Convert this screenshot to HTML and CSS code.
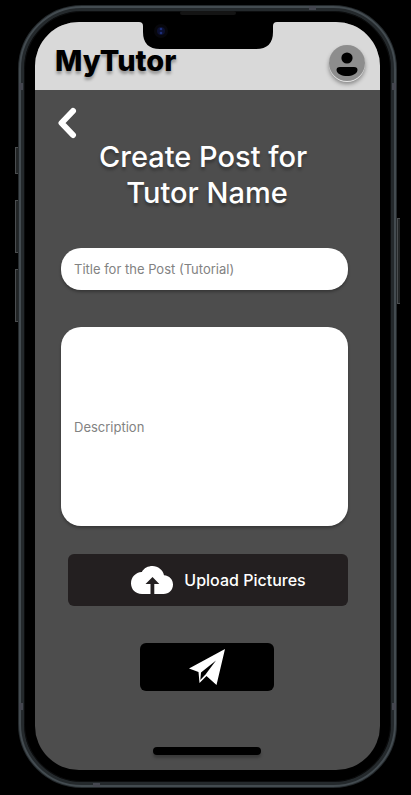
FILE: index.html
```html
<!DOCTYPE html>
<html lang="en">
<head>
<meta charset="utf-8">
<meta name="viewport" content="width=device-width, initial-scale=1">
<title>MyTutor</title>
<link rel="stylesheet" href="styles.css">
</head>
<body>
<div class="phone">
  <span class="key key-mute"></span>
  <span class="key key-up"></span>
  <span class="key key-down"></span>
  <span class="key key-power"></span>
  <span class="band band-top"></span>
  <span class="band band-bottom"></span>
  <span class="band band-left"></span>
  <span class="band band-right"></span>
  <span class="band band-left low"></span>
  <span class="band band-right low"></span>
  <span class="speaker"></span>
  <div class="screen">
    <svg class="notch" viewBox="0 0 138 27" aria-hidden="true">
      <path d="M0 0H138Q134 0 134 4V10Q134 27 117 27H21Q4 27 4 10V4Q4 0 0 0Z"/>
      <circle cx="22" cy="9" r="7" fill="#07070c"/>
      <circle cx="22" cy="9" r="4" fill="#0c1030"/>
      <circle cx="22" cy="7" r="1.3" fill="#1c2e78"/>
      <circle cx="22" cy="11" r="1.3" fill="#1c2e78"/>
    </svg>
    <header class="topbar">
      <span class="brand">MyTutor</span>
      <button class="avatar" type="button" aria-label="Profile">
        <svg viewBox="0 0 36 36" aria-hidden="true">
          <circle cx="18" cy="13" r="5.6"/>
          <path d="M11 22H25Q28.500 22 28.500 25C28 29 23 31 18 31S8 29 7.500 25Q7.500 22 11 22Z"/>
        </svg>
      </button>
    </header>
    <main class="content">
      <a class="back" href="#" aria-label="Back">
        <svg viewBox="0 0 20 32" aria-hidden="true"><path d="M16 4L4.500 16L16 28"/></svg>
      </a>
      <h1>Create Post for&nbsp;<br>Tutor Name</h1>
      <form class="form">
        <input class="field" type="text" aria-label="Title" placeholder="Title for the Post (Tutorial)">
        <textarea class="field description" aria-label="Description" placeholder="Description"></textarea>
        <button class="upload" type="button">
          <svg viewBox="0 0 42 28" aria-hidden="true">
            <path fill="#fff" d="M11 28C4 28 0 23 0 17.300C0 11 4.500 6.500 10.800 6C13 2 17 0 21.500 0C27 0 32 4 33 9.200C38.500 9.500 42 13.500 42 18.500C42 24 38 28 32.500 28Z"/>
            <path fill="#231f20" d="M21.500 11L28.300 18H23.300V28H19.500V18H14.500Z"/>
          </svg>
          <span>Upload Pictures</span>
        </button>
        <button class="send" type="submit" aria-label="Send">
          <svg viewBox="0 0 36 36" aria-hidden="true">
            <path d="M36 0L27.500 36L17.500 27L10.500 34L9.500 23L0 19.500Z" fill="#fff"/>
            <path d="M27 11.500L12 23.500L11.300 31L16.500 25.500Z" fill="#000"/>
          </svg>
        </button>
      </form>
      <span class="home"></span>
    </main>
  </div>
</div>
</body>
</html>
```
FILE: styles.css
```css
* {
  box-sizing: border-box;
}

body {
  margin: 0;
  padding: 5px 14px 7px 18px;
  background: #000;
  font-family: Inter, "Liberation Sans", sans-serif;
}

.phone {
  position: relative;
  padding: 11px 11px 12px;
  border: 6px solid #24292c;
  border-radius: 64px;
  background: #000;
  box-shadow: inset 0 0 0 1px #0c0d0e;
}

.phone::before {
  content: "";
  position: absolute;
  inset: -5px;
  border: 2px solid #434b50;
  border-radius: 63px;
  pointer-events: none;
}

.key {
  position: absolute;
  left: -9px;
  width: 3px;
  border: 1px solid #4a4d4f;
  border-right: 0;
  background: #222526;
}

.key-mute {
  top: 136px;
  height: 27px;
}

.key-up {
  top: 189px;
  height: 53px;
}

.key-down {
  top: 258px;
  height: 53px;
}

.key-power {
  top: 207px;
  left: auto;
  right: -9px;
  height: 86px;
}

.band {
  position: absolute;
  background: #44464f;
}

.band-top,
.band-bottom {
  width: 7px;
  height: 4px;
}

.band-top {
  top: -5px;
  right: 75px;
}

.band-bottom {
  bottom: -5px;
  left: 69px;
}

.band-left,
.band-right {
  top: 72px;
  width: 4px;
  height: 7px;
}

.band-left {
  left: -5px;
}

.band-right {
  right: -5px;
}

.low {
  top: auto;
  bottom: 72px;
}

.speaker {
  position: absolute;
  z-index: 2;
  top: 0;
  left: 50%;
  width: 56px;
  height: 4px;
  margin-left: -28px;
  border-radius: 2px;
  background: #141414;
}

.screen {
  position: relative;
  overflow: hidden;
  border-radius: 44px;
  background: #4d4d4d;
}

.notch {
  position: absolute;
  top: 0;
  left: 50%;
  width: 138px;
  height: 27px;
  margin-left: -69px;
}

.topbar {
  display: flex;
  justify-content: space-between;
  align-items: flex-end;
  height: 68px;
  padding: 0 15px 9px 20px;
  background: #d9d9d9;
}

.brand {
  padding-bottom: 2px;
  color: #000;
  font-size: 29px;
  font-weight: 800;
  line-height: 36px;
  text-shadow: 0 3px 3px rgba(0, 0, 0, 0.3);
}

button {
  padding: 0;
  border: 0;
  font: inherit;
}

.avatar {
  width: 36px;
  height: 36px;
  border-radius: 50%;
  background: #8d8d8d;
  box-shadow: 0 1px 0 #e6e6e6, 0 3px 4px rgba(0, 0, 0, 0.4);
}

svg {
  display: block;
}

.content {
  display: flex;
  flex-direction: column;
  padding: 17px 32px 15px 26px;
}

.back {
  align-self: flex-start;
  margin-left: -4px;
}

.back svg {
  width: 20px;
  height: 32px;
  fill: none;
  stroke: #fff;
  stroke-width: 6;
  stroke-linecap: round;
  stroke-linejoin: round;
}

h1 {
  margin: 0;
  padding-left: 5px;
  color: #fff;
  font-size: 29px;
  font-weight: 500;
  line-height: 36px;
  text-align: center;
  text-shadow: 0 3px 3px rgba(0, 0, 0, 0.3);
}

.form {
  display: flex;
  flex-direction: column;
  margin-top: 37px;
}

.field {
  display: block;
  width: 100%;
  height: 42px;
  margin: 0 0 37px;
  padding: 0 13px;
  border: 0;
  border-radius: 20px;
  background: #fff;
  color: #222;
  font-family: inherit;
  font-size: 13px;
  line-height: 16px;
  box-shadow: 0 2px 3px rgba(0, 0, 0, 0.3);
  outline: 0;
}

.field::placeholder {
  color: #828282;
  opacity: 1;
}

.description {
  height: 199px;
  margin-bottom: 28px;
  padding-top: 92px;
  resize: none;
}

.upload {
  display: flex;
  justify-content: center;
  align-items: center;
  gap: 11px;
  height: 52px;
  margin-left: 7px;
  padding-left: 21px;
  border-radius: 6px;
  background: #231f20;
  color: #fff;
  font-size: 16px;
  font-weight: 500;
  line-height: 20px;
}

.upload svg {
  width: 42px;
  height: 28px;
}

.send {
  display: flex;
  justify-content: center;
  align-items: center;
  align-self: center;
  width: 134px;
  height: 48px;
  margin: 37px 0 56px 5px;
  border-radius: 6px;
  background: #000;
}

.send svg {
  width: 36px;
  height: 36px;
}

.home {
  align-self: center;
  width: 108px;
  height: 8px;
  margin-left: 5px;
  border-radius: 4px;
  background: #000;
  box-shadow: 0 3px 3px rgba(0, 0, 0, 0.25);
}
```
